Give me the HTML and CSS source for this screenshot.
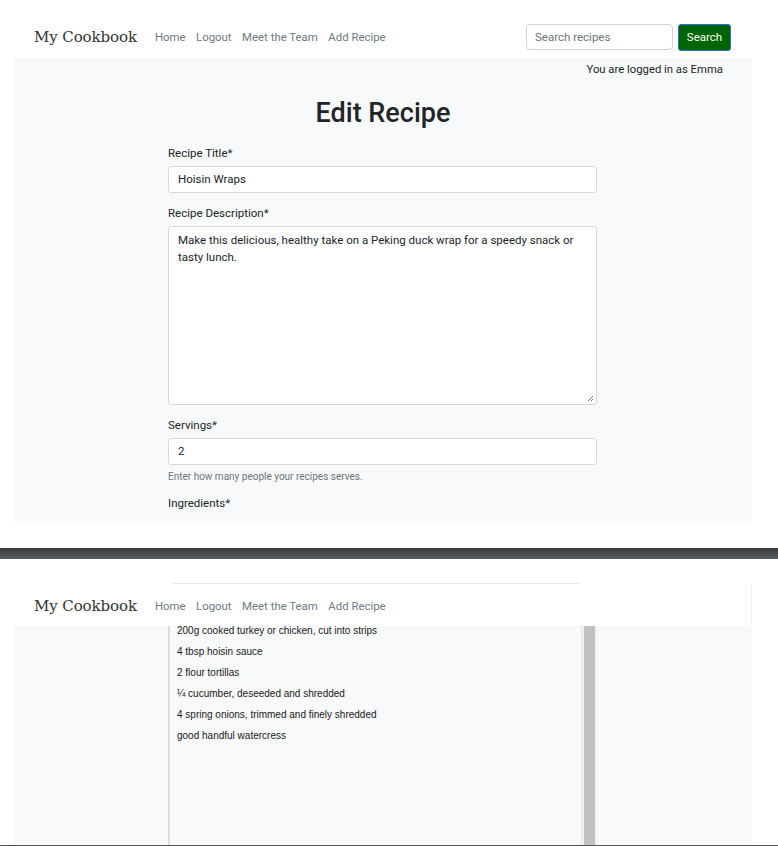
FILE: index.html
```html
<!DOCTYPE html>
<html lang="en">
<head>
<meta charset="utf-8">
<title>My Cookbook - Edit Recipe</title>
<link rel="stylesheet" href="styles.css">
</head>
<body>
<section class="shot shot-one">
  <nav class="navbar">
    <a class="brand" href="#">My Cookbook</a>
    <ul class="nav-links">
      <li><a href="#">Home</a></li>
      <li><a href="#">Logout</a></li>
      <li><a href="#">Meet the Team</a></li>
      <li><a href="#">Add Recipe</a></li>
    </ul>
    <form class="search">
      <input class="search-input" type="text" placeholder="Search recipes">
      <button class="search-btn" type="button">Search</button>
    </form>
  </nav>
  <main class="main">
    <p class="logged">You are logged in as Emma</p>
    <h1 class="title">Edit Recipe</h1>
    <div class="form">
      <label class="label">Recipe Title*</label>
      <div class="input">Hoisin Wraps</div>
      <label class="label">Recipe Description*</label>
      <div class="input textarea">Make this delicious, healthy take on a Peking duck wrap for a speedy snack or tasty lunch.
        <svg class="grip" width="7" height="7" viewBox="0 0 7 7"><path d="M6 1 L1 6 M6 4 L4 6" stroke="#777" stroke-width="1"/></svg>
      </div>
      <label class="label">Servings*</label>
      <div class="input">2</div>
      <p class="help">Enter how many people your recipes serves.</p>
      <label class="label">Ingredients*</label>
    </div>
  </main>
</section>
<div class="band"></div>
<section class="shot shot-two">
  <div class="behind"><div class="behind-line"></div></div>
  <nav class="navbar navbar-two">
    <a class="brand" href="#">My Cookbook</a>
    <ul class="nav-links">
      <li><a href="#">Home</a></li>
      <li><a href="#">Logout</a></li>
      <li><a href="#">Meet the Team</a></li>
      <li><a href="#">Add Recipe</a></li>
    </ul>
  </nav>
  <main class="main main-two">
    <div class="ing-box">
      <ul class="ing-list">
        <li>200g cooked turkey or chicken, cut into strips</li>
        <li>4 tbsp hoisin sauce</li>
        <li>2 flour tortillas</li>
        <li>¼ cucumber, deseeded and shredded</li>
        <li>4 spring onions, trimmed and finely shredded</li>
        <li>good handful watercress</li>
      </ul>
      <div class="scrollbar"><div class="thumb"></div></div>
    </div>
  </main>
  <div class="bottom-line"></div>
</section>
</body>
</html>
```
FILE: styles.css
```css
* { box-sizing: border-box; }
html, body { margin: 0; padding: 0; background: #fff; }
body { font-family: Roboto, "Liberation Sans", sans-serif; color: #212529; width: 778px; overflow: hidden; }

.shot-one { height: 548px; display: flex; flex-direction: column; }

.navbar {
  height: 58px;
  display: flex;
  align-items: center;
  padding: 16px 47px 0 34px;
  background: #fff;
}
.brand {
  font-family: "DejaVu Serif", serif;
  font-size: 15px;
  color: #333;
  text-decoration: none;
  letter-spacing: -0.1px;
}
.nav-links { list-style: none; display: flex; margin: -3px 0 0 18px; padding: 0; gap: 10.5px; }
.nav-links a { font-size: 11.4px; color: #6f7984; text-decoration: none; }
.search { display: flex; gap: 5px; margin: 0 0 0 auto; }
.search-input {
  width: 147px; height: 26px; border: 1px solid #ced4da; border-radius: 4px;
  font-family: Roboto, sans-serif; font-size: 11.5px; padding: 0 8px; color: #212529;
}
.search-input::placeholder { color: #6c757d; }
.search-btn {
  width: 53px; height: 27px; background: #006400; color: #fff; border: 1px solid #2f6fd6;
  border-radius: 3px; font-family: Roboto, sans-serif; font-size: 11.5px; padding: 0;
}

.main { background: #f8f9fa; margin: 0 26px 0 14px; height: 463px; display: flex; flex-direction: column; }
.logged { margin: 5px 29px 0 0; font-size: 11.3px; text-align: right; line-height: 14px; }
.title { margin: 20px 0 0; text-align: center; font-size: 27px; font-weight: 500; line-height: 32px; }
.form { width: 429px; margin: 17px 0 0 154px; display: flex; flex-direction: column; }
.label { font-size: 11.5px; line-height: 14px; margin-bottom: 6px; }
.input {
  background: #fff; border: 1px solid #d5d9dd; border-radius: 3px; height: 27px;
  font-size: 11.5px; line-height: 25px; padding: 0 9px; margin-bottom: 13px;
}
.textarea { height: 179px; line-height: 17px; padding: 5px 9px; position: relative; }
.grip { position: absolute; right: 2px; bottom: 2px; }
.help { margin: -8px 0 12px; font-size: 10px; color: #6c757d; line-height: 14px; }

.band { height: 11px; background: linear-gradient(#37393c, #5b5f63); }

.shot-two { height: 287px; display: flex; flex-direction: column; position: relative; }
.behind { height: 25px; padding: 0 0 0 172px; display: flex; align-items: flex-end; }
.behind-line { width: 408px; height: 1px; background: #e9e9e9; }
.navbar-two { height: 42px; padding-top: 2px; margin-right: 26px; border-right: 1px solid #f0f0f0; }
.main-two { height: 219px; overflow: hidden; flex-direction: row; }
.ing-box {
  margin-left: 154px; width: 429px; display: flex; height: 100%;
  border-left: 2px solid #dcdcdc;
}
.ing-list {
  list-style: none; margin: -2px 0 0; padding: 0 0 0 7px; flex: 1;
  font-family: "Liberation Sans", Arial, sans-serif; font-size: 10px; color: #202020;
  border-right: 1px solid #e4e4e4;
}
.ing-list li { height: 21px; line-height: 14px; }
.scrollbar { width: 15px; background: #f1f1f1; padding: 0 2px; }
.thumb { height: 100%; background: #c1c1c1; }
.bottom-line { position: absolute; left: 0; right: 0; bottom: 0; height: 1px; background: #555; }
```
